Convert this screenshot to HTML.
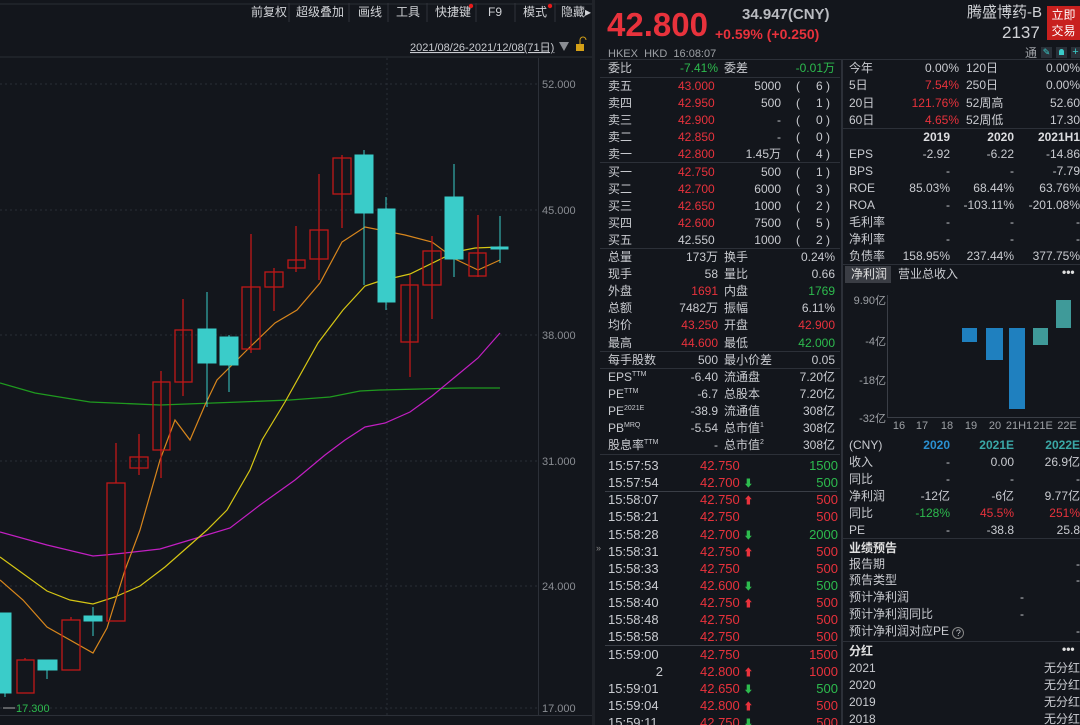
<!DOCTYPE html>
<html style="overflow:hidden;height:725px"><head><meta charset="utf-8"><style>
*{margin:0;padding:0;box-sizing:border-box}
html,body{overflow:hidden}
body{width:1080px;height:725px;background:#13161c;position:relative;font-family:"Liberation Sans","Noto Sans CJK SC",sans-serif;font-size:12px;color:#c9cbd0}
div.t{position:absolute;white-space:nowrap;line-height:16px;height:16px}
sup{line-height:0;font-size:7px}
.R{color:#e8323c}.G{color:#2dbb4e}.W{color:#c9cbd0}.B{color:#2a8fd0}.T{color:#3aa7a6}
.hl{position:absolute;height:1px;background:#2c3038}
.vl{position:absolute;width:1px;background:#2c3038}
.tk{position:absolute;left:608px;top:457px;width:230px;font-size:13px}
.tk>div{display:flex;height:17.15px;line-height:17px;overflow:hidden}
.tk span.a{width:92px}.tk span.b{width:60px}.tk span.c{flex:1}
.tk b{font-size:10px}
</style></head><body>
<svg width="595" height="725" style="position:absolute;left:0;top:0">
<line x1="0" y1="4" x2="595" y2="4" stroke="#2a2d33"/>
<line x1="0" y1="57" x2="595" y2="57" stroke="#2a2d33"/>
<g stroke="#2a2e36" stroke-dasharray="2,3">
<line x1="0" y1="84" x2="538" y2="84"/><line x1="0" y1="210" x2="538" y2="210"/><line x1="0" y1="335" x2="538" y2="335"/><line x1="0" y1="461" x2="538" y2="461"/><line x1="0" y1="586" x2="538" y2="586"/><line x1="0" y1="708" x2="538" y2="708"/>
<line x1="387" y1="58" x2="387" y2="715"/>
</g>
<line x1="538.5" y1="58" x2="538.5" y2="715" stroke="#2c3038"/>
<line x1="0" y1="715.5" x2="595" y2="715.5" stroke="#2c3038"/>
<rect x="592" y="0" width="5" height="725" fill="#202329"/>
<g fill="#8a8d93" font-size="11" font-family="Liberation Sans">
<text x="542" y="88">52.000</text><text x="542" y="214">45.000</text><text x="542" y="339">38.000</text><text x="542" y="465">31.000</text><text x="542" y="590">24.000</text><text x="542" y="712">17.000</text>
</g>
<text x="16" y="712" fill="#2dbb4e" font-size="11" font-family="Liberation Sans">17.300</text>
<line x1="3" y1="708" x2="15" y2="708" stroke="#aaa"/>
<polyline fill="none" stroke="#1f9a1f" stroke-width="1.3" points="0,383 35,393 90,402 160,405 240,402 290,400 330,397 360,391 380,390 420,389 460,388 500,388"/>
<polyline fill="none" stroke="#c21fc2" stroke-width="1.2" points="0,532 47,545 93,556 105,555 125,553 160,549 190,540 230,528 260,505 295,480 325,455 345,440 365,427 385,423 410,412 432,396 455,377 478,358 500,333"/>
<polyline fill="none" stroke="#d6c614" stroke-width="1.2" points="0,557 47,591 70,600 93,604 115,597 140,586 165,567 190,545 207,530 227,510 250,470 262,440 285,402 318,343 343,310 365,286 380,281 410,274 455,252 475,248 500,247"/>
<polyline fill="none" stroke="#d8861c" stroke-width="1.2" points="0,580 23,600 47,627 93,653 107,628 125,570 140,530 160,460 175,420 190,440 205,405 217,380 250,347 275,323 297,310 320,283 342,242 365,227 405,235 432,242 455,259 478,270 500,260"/>
<g stroke="#c01818" fill="none" stroke-width="1.3">
<line x1="25" y1="658" x2="25" y2="660"/><rect x="17" y="660" width="17" height="33"/>
<line x1="71" y1="617" x2="71" y2="620"/><rect x="62" y="620" width="18" height="50"/>
<line x1="116" y1="443" x2="116" y2="483"/><rect x="107" y="483" width="18" height="138"/>
<line x1="139" y1="434" x2="139" y2="475"/><rect x="130" y="457" width="18" height="11"/>
<line x1="161" y1="371" x2="161" y2="478"/><rect x="153" y="382" width="17" height="68"/>
<line x1="183" y1="299" x2="183" y2="396"/><rect x="175" y="330" width="17" height="52"/>
<line x1="251" y1="234" x2="251" y2="353"/><rect x="242" y="287" width="18" height="62"/>
<line x1="274" y1="268" x2="274" y2="311"/><rect x="265" y="272" width="18" height="15"/>
<line x1="296" y1="226" x2="296" y2="272"/><rect x="288" y="260" width="17" height="8"/>
<line x1="319" y1="174" x2="319" y2="280"/><rect x="310" y="230" width="18" height="29"/>
<line x1="342" y1="155" x2="342" y2="228"/><rect x="333" y="158" width="18" height="36"/>
<line x1="410" y1="275" x2="410" y2="377"/><rect x="401" y="285" width="17" height="57"/>
<line x1="432" y1="236" x2="432" y2="319"/><rect x="423" y="251" width="18" height="34"/>
<line x1="478" y1="215" x2="478" y2="277"/><rect x="469" y="253" width="17" height="23"/>
</g>
<g fill="#3accc9" stroke="#3accc9">
<rect x="0" y="613" width="11" height="80"/><line x1="5" y1="693" x2="5" y2="697"/>
<rect x="38" y="660" width="19" height="10"/><line x1="47" y1="670" x2="47" y2="679"/>
<rect x="84" y="616" width="18" height="5"/><line x1="93" y1="607" x2="93" y2="636"/>
<rect x="198" y="329" width="18" height="34"/><line x1="207" y1="292" x2="207" y2="407"/>
<rect x="220" y="337" width="18" height="28"/><line x1="229" y1="335" x2="229" y2="392"/>
<rect x="355" y="155" width="18" height="58"/><line x1="364" y1="150" x2="364" y2="285"/>
<rect x="378" y="209" width="17" height="93"/><line x1="386" y1="197" x2="386" y2="310"/>
<rect x="445" y="197" width="18" height="62"/><line x1="454" y1="164" x2="454" y2="277"/>
<rect x="491" y="247" width="17" height="2"/><line x1="500" y1="216" x2="500" y2="263"/>
</g>
<g fill="#d0d2d6" font-size="12" font-family="Liberation Sans,Noto Sans CJK SC">
<text x="251" y="16">前复权</text><text x="296" y="16">超级叠加</text><text x="358" y="16">画线</text><text x="396" y="16">工具</text><text x="435" y="16">快捷键</text><text x="488" y="16">F9</text><text x="523" y="16">模式</text><text x="561" y="16">隐藏▸</text>
</g>
<g stroke="#2f333a"><line x1="289" y1="3" x2="289" y2="22"/><line x1="349" y1="3" x2="349" y2="22"/><line x1="388" y1="3" x2="388" y2="22"/><line x1="427" y1="3" x2="427" y2="22"/><line x1="476" y1="3" x2="476" y2="22"/><line x1="515" y1="3" x2="515" y2="22"/><line x1="555" y1="3" x2="555" y2="22"/></g>
<circle cx="471" cy="6" r="2.2" fill="#e81a1a"/><circle cx="550" cy="6" r="2.2" fill="#e81a1a"/>
<text x="410" y="51" fill="#c9cbd0" font-size="11" font-family="Liberation Sans,Noto Sans CJK SC" text-decoration="underline">2021/08/26-2021/12/08(71日)</text>
<path d="M559 42 L569 42 L564 51 Z" fill="#8a8d93"/>
<rect x="576" y="44" width="8" height="7" fill="#d4a017"/><path d="M580 44 v-4 a3 3 0 0 1 6 0" fill="none" stroke="#d4a017"/>
</svg>

<div class="t R" style="left:607px;top:6px;font-size:33px;line-height:38px;height:38px;font-weight:bold">42.800</div>
<div class="t" style="left:742px;top:7px;font-size:15px;color:#b9bbc0;font-weight:bold">34.947(CNY)</div>
<div class="t R" style="left:715px;top:26px;font-size:14px;font-weight:bold">+0.59% (+0.250)</div>
<div class="t" style="left:608px;top:46px;font-size:11px;color:#9ea1a6">HKEX&nbsp;&nbsp;HKD&nbsp;&nbsp;16:08:07</div>
<div class="t" style="left:967px;top:5px;font-size:15px;color:#d0d2d6">腾盛博药-B</div>
<div class="t" style="left:1002px;top:23px;font-size:17px;line-height:20px;height:20px;color:#d0d2d6">2137</div>
<div style="position:absolute;left:1047px;top:6px;width:33px;height:34px;background:#c8201e;color:#fff;font-size:12px;line-height:16px;text-align:center;padding-top:1px">立即<br>交易</div>
<div class="t" style="left:1025px;top:45px;font-size:12px;color:#9ea1a6">通</div>
<div style="position:absolute;left:1041px;top:47px;width:11px;height:11px;background:#2a3038;color:#3accc9;font-size:9px;line-height:11px;text-align:center">✎</div>
<div style="position:absolute;left:1056px;top:47px;width:11px;height:11px;background:#2a3038"><div style="margin:2px 3px;width:5px;height:6px;background:#3accc9;border-radius:3px 3px 0 0"></div></div>
<div style="position:absolute;left:1071px;top:47px;width:9px;height:11px;background:#2a3038;color:#3accc9;font-size:11px;line-height:11px;text-align:center">+</div>

<div class="hl" style="left:600px;top:59px;width:480px"></div>
<div class="vl" style="left:841px;top:60px;height:665px;width:2px"></div>
<div class="hl" style="left:600px;top:77px;width:240px"></div>
<div class="hl" style="left:600px;top:162px;width:240px"></div>
<div class="hl" style="left:600px;top:248px;width:240px"></div>
<div class="hl" style="left:600px;top:351px;width:240px"></div>
<div class="hl" style="left:600px;top:368px;width:240px"></div>
<div class="hl" style="left:600px;top:454px;width:240px"></div>
<div class="hl" style="left:605px;top:491px;width:232px;background:#3a3e46"></div>
<div class="hl" style="left:605px;top:645px;width:232px;background:#3a3e46"></div>
<div class="hl" style="left:843px;top:128px;width:237px"></div>
<div class="hl" style="left:843px;top:264px;width:237px"></div>
<div class="hl" style="left:843px;top:538px;width:237px"></div>
<div class="hl" style="left:843px;top:641px;width:237px"></div>

<div class="t" style="left:608px;top:60px">委比</div><div class="t G" style="right:362px;top:60px">-7.41%</div><div class="t" style="left:724px;top:60px">委差</div><div class="t G" style="right:245px;top:60px">-0.01万</div>

<div class="t" style="left:608px;top:78px">卖五</div><div class="t R" style="left:678px;top:78px">43.000</div><div class="t" style="right:299px;top:78px">5000</div><div class="t" style="left:796px;top:78px">(</div><div class="t" style="right:250px;top:78px">6 )</div>
<div class="t" style="left:608px;top:95px">卖四</div><div class="t R" style="left:678px;top:95px">42.950</div><div class="t" style="right:299px;top:95px">500</div><div class="t" style="left:796px;top:95px">(</div><div class="t" style="right:250px;top:95px">1 )</div>
<div class="t" style="left:608px;top:112px">卖三</div><div class="t R" style="left:678px;top:112px">42.900</div><div class="t" style="right:299px;top:112px">-</div><div class="t" style="left:796px;top:112px">(</div><div class="t" style="right:250px;top:112px">0 )</div>
<div class="t" style="left:608px;top:129px">卖二</div><div class="t R" style="left:678px;top:129px">42.850</div><div class="t" style="right:299px;top:129px">-</div><div class="t" style="left:796px;top:129px">(</div><div class="t" style="right:250px;top:129px">0 )</div>
<div class="t" style="left:608px;top:146px">卖一</div><div class="t R" style="left:678px;top:146px">42.800</div><div class="t" style="right:299px;top:146px">1.45万</div><div class="t" style="left:796px;top:146px">(</div><div class="t" style="right:250px;top:146px">4 )</div>
<div class="t" style="left:608px;top:164px">买一</div><div class="t R" style="left:678px;top:164px">42.750</div><div class="t" style="right:299px;top:164px">500</div><div class="t" style="left:796px;top:164px">(</div><div class="t" style="right:250px;top:164px">1 )</div>
<div class="t" style="left:608px;top:181px">买二</div><div class="t R" style="left:678px;top:181px">42.700</div><div class="t" style="right:299px;top:181px">6000</div><div class="t" style="left:796px;top:181px">(</div><div class="t" style="right:250px;top:181px">3 )</div>
<div class="t" style="left:608px;top:198px">买三</div><div class="t R" style="left:678px;top:198px">42.650</div><div class="t" style="right:299px;top:198px">1000</div><div class="t" style="left:796px;top:198px">(</div><div class="t" style="right:250px;top:198px">2 )</div>
<div class="t" style="left:608px;top:215px">买四</div><div class="t R" style="left:678px;top:215px">42.600</div><div class="t" style="right:299px;top:215px">7500</div><div class="t" style="left:796px;top:215px">(</div><div class="t" style="right:250px;top:215px">5 )</div>
<div class="t" style="left:608px;top:232px">买五</div><div class="t" style="left:678px;top:232px">42.550</div><div class="t" style="right:299px;top:232px">1000</div><div class="t" style="left:796px;top:232px">(</div><div class="t" style="right:250px;top:232px">2 )</div>

<div class="t" style="left:608px;top:249px">总量</div><div class="t" style="right:362px;top:249px">173万</div><div class="t" style="left:724px;top:249px">换手</div><div class="t" style="right:245px;top:249px">0.24%</div>
<div class="t" style="left:608px;top:266px">现手</div><div class="t" style="right:362px;top:266px">58</div><div class="t" style="left:724px;top:266px">量比</div><div class="t" style="right:245px;top:266px">0.66</div>
<div class="t" style="left:608px;top:283px">外盘</div><div class="t R" style="right:362px;top:283px">1691</div><div class="t" style="left:724px;top:283px">内盘</div><div class="t G" style="right:245px;top:283px">1769</div>
<div class="t" style="left:608px;top:300px">总额</div><div class="t" style="right:362px;top:300px">7482万</div><div class="t" style="left:724px;top:300px">振幅</div><div class="t" style="right:245px;top:300px">6.11%</div>
<div class="t" style="left:608px;top:317px">均价</div><div class="t R" style="right:362px;top:317px">43.250</div><div class="t" style="left:724px;top:317px">开盘</div><div class="t R" style="right:245px;top:317px">42.900</div>
<div class="t" style="left:608px;top:335px">最高</div><div class="t R" style="right:362px;top:335px">44.600</div><div class="t" style="left:724px;top:335px">最低</div><div class="t G" style="right:245px;top:335px">42.000</div>
<div class="t" style="left:608px;top:352px">每手股数</div><div class="t" style="right:362px;top:352px">500</div><div class="t" style="left:724px;top:352px">最小价差</div><div class="t" style="right:245px;top:352px">0.05</div>
<div class="t" style="left:608px;top:369px">EPS<sup>TTM</sup></div><div class="t" style="right:362px;top:369px">-6.40</div><div class="t" style="left:724px;top:369px">流通盘</div><div class="t" style="right:245px;top:369px">7.20亿</div>
<div class="t" style="left:608px;top:386px">PE<sup>TTM</sup></div><div class="t" style="right:362px;top:386px">-6.7</div><div class="t" style="left:724px;top:386px">总股本</div><div class="t" style="right:245px;top:386px">7.20亿</div>
<div class="t" style="left:608px;top:403px">PE<sup>2021E</sup></div><div class="t" style="right:362px;top:403px">-38.9</div><div class="t" style="left:724px;top:403px">流通值</div><div class="t" style="right:245px;top:403px">308亿</div>
<div class="t" style="left:608px;top:420px">PB<sup>MRQ</sup></div><div class="t" style="right:362px;top:420px">-5.54</div><div class="t" style="left:724px;top:420px">总市值<sup>1</sup></div><div class="t" style="right:245px;top:420px">308亿</div>
<div class="t" style="left:608px;top:437px">股息率<sup>TTM</sup></div><div class="t" style="right:362px;top:437px">-</div><div class="t" style="left:724px;top:437px">总市值<sup>2</sup></div><div class="t" style="right:245px;top:437px">308亿</div>

<div class="tk">
<div><span class="a">15:57:53</span><span class="b R">42.750</span><span class="c"></span><span class="G">1500</span></div>
<div><span class="a">15:57:54</span><span class="b R">42.700 <b class="G">⬇</b></span><span class="c"></span><span class="G">500</span></div>
<div><span class="a">15:58:07</span><span class="b R">42.750 <b>⬆</b></span><span class="c"></span><span class="R">500</span></div>
<div><span class="a">15:58:21</span><span class="b R">42.750</span><span class="c"></span><span class="R">500</span></div>
<div><span class="a">15:58:28</span><span class="b R">42.700 <b class="G">⬇</b></span><span class="c"></span><span class="G">2000</span></div>
<div><span class="a">15:58:31</span><span class="b R">42.750 <b>⬆</b></span><span class="c"></span><span class="R">500</span></div>
<div><span class="a">15:58:33</span><span class="b R">42.750</span><span class="c"></span><span class="R">500</span></div>
<div><span class="a">15:58:34</span><span class="b R">42.600 <b class="G">⬇</b></span><span class="c"></span><span class="G">500</span></div>
<div><span class="a">15:58:40</span><span class="b R">42.750 <b>⬆</b></span><span class="c"></span><span class="R">500</span></div>
<div><span class="a">15:58:48</span><span class="b R">42.750</span><span class="c"></span><span class="R">500</span></div>
<div><span class="a">15:58:58</span><span class="b R">42.750</span><span class="c"></span><span class="R">500</span></div>
<div><span class="a">15:59:00</span><span class="b R">42.750</span><span class="c"></span><span class="R">1500</span></div>
<div><span class="a" style="text-align:right;padding-right:37px">2</span><span class="b R">42.800 <b>⬆</b></span><span class="c"></span><span class="R">1000</span></div>
<div><span class="a">15:59:01</span><span class="b R">42.650 <b class="G">⬇</b></span><span class="c"></span><span class="G">500</span></div>
<div><span class="a">15:59:04</span><span class="b R">42.800 <b>⬆</b></span><span class="c"></span><span class="R">500</span></div>
<div><span class="a">15:59:11</span><span class="b R">42.750 <b class="G">⬇</b></span><span class="c"></span><span class="R">500</span></div>
</div>
<div class="t" style="left:596px;top:540px;font-size:9px;color:#888">»</div>

<div class="t" style="left:849px;top:60px">今年</div><div class="t" style="right:121px;top:60px">0.00%</div><div class="t" style="left:966px;top:60px">120日</div><div class="t" style="right:0;top:60px">0.00%</div>
<div class="t" style="left:849px;top:77px">5日</div><div class="t R" style="right:121px;top:77px">7.54%</div><div class="t" style="left:966px;top:77px">250日</div><div class="t" style="right:0;top:77px">0.00%</div>
<div class="t" style="left:849px;top:95px">20日</div><div class="t R" style="right:121px;top:95px">121.76%</div><div class="t" style="left:966px;top:95px">52周高</div><div class="t" style="right:0;top:95px">52.60</div>
<div class="t" style="left:849px;top:112px">60日</div><div class="t R" style="right:121px;top:112px">4.65%</div><div class="t" style="left:966px;top:112px">52周低</div><div class="t" style="right:0;top:112px">17.30</div>

<div class="t" style="right:130px;top:129px;font-weight:bold;color:#dcdde0">2019</div><div class="t" style="right:66px;top:129px;font-weight:bold;color:#dcdde0">2020</div><div class="t" style="right:0;top:129px;font-weight:bold;color:#dcdde0">2021H1</div>
<div class="t" style="left:849px;top:146px">EPS</div><div class="t" style="right:130px;top:146px">-2.92</div><div class="t" style="right:66px;top:146px">-6.22</div><div class="t" style="right:0;top:146px">-14.86</div>
<div class="t" style="left:849px;top:163px">BPS</div><div class="t" style="right:130px;top:163px">-</div><div class="t" style="right:66px;top:163px">-</div><div class="t" style="right:0;top:163px">-7.79</div>
<div class="t" style="left:849px;top:180px">ROE</div><div class="t" style="right:130px;top:180px">85.03%</div><div class="t" style="right:66px;top:180px">68.44%</div><div class="t" style="right:0;top:180px">63.76%</div>
<div class="t" style="left:849px;top:197px">ROA</div><div class="t" style="right:130px;top:197px">-</div><div class="t" style="right:66px;top:197px">-103.11%</div><div class="t" style="right:0;top:197px">-201.08%</div>
<div class="t" style="left:849px;top:214px">毛利率</div><div class="t" style="right:130px;top:214px">-</div><div class="t" style="right:66px;top:214px">-</div><div class="t" style="right:0;top:214px">-</div>
<div class="t" style="left:849px;top:231px">净利率</div><div class="t" style="right:130px;top:231px">-</div><div class="t" style="right:66px;top:231px">-</div><div class="t" style="right:0;top:231px">-</div>
<div class="t" style="left:849px;top:248px">负债率</div><div class="t" style="right:130px;top:248px">158.95%</div><div class="t" style="right:66px;top:248px">237.44%</div><div class="t" style="right:0;top:248px">377.75%</div>

<div style="position:absolute;left:845px;top:266px;width:46px;height:17px;background:#3a3d44"></div>
<div class="t" style="left:851px;top:266px;color:#e0e0e0">净利润</div><div class="t" style="left:898px;top:266px">营业总收入</div>
<div class="t" style="left:1062px;top:264px;font-weight:bold;color:#ddd">•••</div>

<svg width="237" height="150" style="position:absolute;left:843px;top:285px">
<g fill="#9ea1a6" font-size="11" font-family="Liberation Sans,Noto Sans CJK SC" text-anchor="end">
<text x="43" y="19">9.90亿</text><text x="43" y="60">-4亿</text><text x="43" y="99">-18亿</text><text x="43" y="137">-32亿</text>
</g>
<line x1="44.5" y1="10" x2="44.5" y2="132" stroke="#3a3e46"/><line x1="44" y1="132.5" x2="237" y2="132.5" stroke="#3a3e46"/>
<rect x="119" y="43" width="15" height="14" fill="#1f80bf"/>
<rect x="143" y="43" width="17" height="32" fill="#1f80bf"/>
<rect x="166" y="43" width="16" height="81" fill="#1f80bf"/>
<rect x="190" y="43" width="15" height="17" fill="#3f9a99"/>
<rect x="213" y="15" width="15" height="28" fill="#3f9a99"/>
<g fill="#9ea1a6" font-size="11" font-family="Liberation Sans" text-anchor="middle">
<text x="56" y="144">16</text><text x="79" y="144">17</text><text x="104" y="144">18</text><text x="128" y="144">19</text><text x="152" y="144">20</text><text x="176" y="144">21H1</text><text x="200" y="144">21E</text><text x="224" y="144">22E</text>
</g>
</svg>

<div class="t" style="left:849px;top:437px">(CNY)</div><div class="t B" style="right:130px;top:437px;font-weight:bold">2020</div><div class="t T" style="right:66px;top:437px;font-weight:bold">2021E</div><div class="t T" style="right:0;top:437px;font-weight:bold">2022E</div>
<div class="t" style="left:849px;top:454px">收入</div><div class="t" style="right:130px;top:454px">-</div><div class="t" style="right:66px;top:454px">0.00</div><div class="t" style="right:0;top:454px">26.9亿</div>
<div class="t" style="left:849px;top:471px">同比</div><div class="t" style="right:130px;top:471px">-</div><div class="t" style="right:66px;top:471px">-</div><div class="t" style="right:0;top:471px">-</div>
<div class="t" style="left:849px;top:488px">净利润</div><div class="t" style="right:130px;top:488px">-12亿</div><div class="t" style="right:66px;top:488px">-6亿</div><div class="t" style="right:0;top:488px">9.77亿</div>
<div class="t" style="left:849px;top:505px">同比</div><div class="t G" style="right:130px;top:505px">-128%</div><div class="t R" style="right:66px;top:505px">45.5%</div><div class="t R" style="right:0;top:505px">251%</div>
<div class="t" style="left:849px;top:522px">PE</div><div class="t" style="right:130px;top:522px">-</div><div class="t" style="right:66px;top:522px">-38.8</div><div class="t" style="right:0;top:522px">25.8</div>

<div class="t" style="left:849px;top:540px;font-weight:bold;color:#e0e0e0">业绩预告</div>
<div class="t" style="left:849px;top:556px">报告期</div><div class="t" style="right:0;top:556px">-</div>
<div class="t" style="left:849px;top:572px">预告类型</div><div class="t" style="right:0;top:572px">-</div>
<div class="t" style="left:849px;top:589px">预计净利润</div><div class="t" style="left:1020px;top:589px">-</div>
<div class="t" style="left:849px;top:606px">预计净利润同比</div><div class="t" style="left:1020px;top:606px">-</div>
<div class="t" style="left:849px;top:623px">预计净利润对应PE <span style="display:inline-block;width:12px;height:12px;border:1px solid #888;border-radius:50%;font-size:9px;line-height:10px;text-align:center;vertical-align:-1px">?</span></div><div class="t" style="right:0;top:623px">-</div>
<div class="t" style="left:849px;top:643px;font-weight:bold;color:#e0e0e0">分红</div><div class="t" style="left:1062px;top:641px;font-weight:bold;color:#ddd">•••</div>
<div class="t" style="left:849px;top:660px">2021</div><div class="t" style="right:0;top:660px">无分红</div>
<div class="t" style="left:849px;top:677px">2020</div><div class="t" style="right:0;top:677px">无分红</div>
<div class="t" style="left:849px;top:694px">2019</div><div class="t" style="right:0;top:694px">无分红</div>
<div class="t" style="left:849px;top:711px">2018</div><div class="t" style="right:0;top:711px">无分红</div>
</body></html>
